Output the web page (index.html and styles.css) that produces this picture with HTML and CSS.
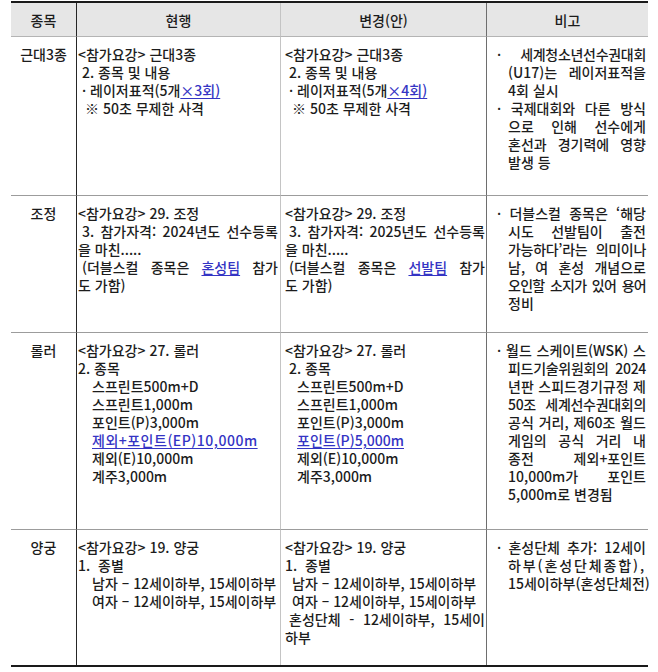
FILE: index.html
```html
<!DOCTYPE html>
<html lang="ko">
<head>
<meta charset="utf-8">
<title>종목 변경 비교표</title>
<link rel="stylesheet" href="styles.css">
</head>
<body>
<table class="cmp">
  <colgroup>
    <col class="w1"><col class="w2"><col class="w3"><col class="w4">
  </colgroup>
  <thead>
    <tr>
      <th class="c1">종목</th>
      <th class="c2">현행</th>
      <th class="c3">변경(안)</th>
      <th class="c4">비고</th>
    </tr>
  </thead>
  <tbody>
    <tr class="r1">
      <td class="c1">근대3종</td>
      <td class="c2">
        <div>&lt;참가요강&gt; 근대3종</div>
        <div class="in1">2. 종목 및 내용</div>
        <div class="in1">· 레이저표적(5개<span class="chg">×3회)</span></div>
        <div class="in2">※ 50초 무제한 사격</div>
      </td>
      <td class="c3">
        <div>&lt;참가요강&gt; 근대3종</div>
        <div class="in1">2. 종목 및 내용</div>
        <div class="in1">· 레이저표적(5개<span class="chg">×4회)</span></div>
        <div class="in2">※ 50초 무제한 사격</div>
      </td>
      <td class="c4">
        <div class="bul j t3">· 세계청소년선수권대회</div>
        <div class="j">(U17)는 레이저표적을</div>
        <div>4회 실시</div>
        <div class="bul j">· 국제대회와 다른 방식</div>
        <div class="j">으로 인해 선수에게</div>
        <div class="j">혼선과 경기력에 영향</div>
        <div>발생 등</div>
      </td>
    </tr>
    <tr class="r2">
      <td class="c1">조정</td>
      <td class="c2">
        <div>&lt;참가요강&gt; 29. 조정</div>
        <div class="in1 j">3. 참가자격: 2024년도 선수등록</div>
        <div>을 마친.....</div>
        <div class="in1 j">(더블스컬 종목은 <span class="chg">혼성팀</span> 참가</div>
        <div>도 가함)</div>
      </td>
      <td class="c3">
        <div>&lt;참가요강&gt; 29. 조정</div>
        <div class="in1 j">3. 참가자격: 2025년도 선수등록</div>
        <div>을 마친.....</div>
        <div class="in1 j">(더블스컬 종목은 <span class="chg">선발팀</span> 참가</div>
        <div>도 가함)</div>
      </td>
      <td class="c4">
        <div class="bul j">· 더블스컬 종목은 ‘해당</div>
        <div class="j">시도 선발팀이 출전</div>
        <div class="j t3">가능하다’라는 의미이나</div>
        <div class="j">남, 여 혼성 개념으로</div>
        <div class="j t7">오인할 소지가 있어 용어</div>
        <div>정비</div>
      </td>
    </tr>
    <tr class="r3">
      <td class="c1">롤러</td>
      <td class="c2">
        <div>&lt;참가요강&gt; 27. 롤러</div>
        <div>2. 종목</div>
        <div class="in3">스프린트500m+D</div>
        <div class="in3">스프린트1,000m</div>
        <div class="in3">포인트(P)3,000m</div>
        <div class="in3"><span class="chg wide">제외+포인트(EP)10,000m</span></div>
        <div class="in3">제외(E)10,000m</div>
        <div class="in3">계주3,000m</div>
      </td>
      <td class="c3">
        <div>&lt;참가요강&gt; 27. 롤러</div>
        <div class="in1">2. 종목</div>
        <div class="in4">스프린트500m+D</div>
        <div class="in4">스프린트1,000m</div>
        <div class="in4">포인트(P)3,000m</div>
        <div class="in4"><span class="chg">포인트(P)5,000m</span></div>
        <div class="in4">제외(E)10,000m</div>
        <div class="in4">계주3,000m</div>
      </td>
      <td class="c4">
        <div class="bul j">· 월드 스케이트(WSK) 스</div>
        <div class="j t3">피드기술위원회의 2024</div>
        <div class="j">년판 스피드경기규정 제</div>
        <div class="j t3">50조 세계선수권대회의</div>
        <div class="j">공식 거리, 제60조 월드</div>
        <div class="j">게임의 공식 거리 내</div>
        <div class="j">종전 제외+포인트</div>
        <div class="j">10,000m가 포인트</div>
        <div>5,000m로 변경됨</div>
      </td>
    </tr>
    <tr class="r4">
      <td class="c1">양궁</td>
      <td class="c2">
        <div>&lt;참가요강&gt; 19. 양궁</div>
        <div>1.&nbsp; 종별</div>
        <div class="in3">남자 – 12세이하부, 15세이하부</div>
        <div class="in3">여자 – 12세이하부, 15세이하부</div>
      </td>
      <td class="c3">
        <div>&lt;참가요강&gt; 19. 양궁</div>
        <div>1.&nbsp; 종별</div>
        <div class="in2">남자 – 12세이하부, 15세이하부</div>
        <div class="in2">여자 – 12세이하부, 15세이하부</div>
        <div class="in1 j">혼성단체 - 12세이하부, 15세이</div>
        <div>하부</div>
      </td>
      <td class="c4">
        <div class="bul j">· 혼성단체 추가: 12세이</div>
        <div class="spread">하부(혼성단체종합),</div>
        <div>15세이하부(혼성단체전)</div>
      </td>
    </tr>
  </tbody>
</table>
</body>
</html>
```

FILE: styles.css
```css
html, body {
  margin: 0;
  background: #ffffff;
}

body {
  padding: 1px 0 0 11px;
  font-family: "Noto Sans CJK KR", "Noto Sans", sans-serif;
  font-size: 14px;
  font-weight: 500;
  line-height: 18px;
  color: #1c1c1c;
}

.cmp {
  border-collapse: separate;
  border-spacing: 0;
  table-layout: fixed;
  width: 637px;
  border-top: 2px solid #1a1a1a;
  border-bottom: 2px solid #1a1a1a;
}

.w1 { width: 66px; }
.w2 { width: 204px; }
.w3 { width: 206px; }
.w4 { width: 161px; }

.cmp th,
.cmp td {
  box-sizing: border-box;
  padding: 0;
}

.cmp th {
  height: 34px;
  padding-top: 1px;
  background: #e6e6e6;
  font-weight: 500;
  text-align: center;
  vertical-align: middle;
  border-bottom: 1px solid #b4b4b4;
}

.cmp td {
  vertical-align: top;
  padding-top: 8px;
  border-bottom: 1px solid #9c9c9c;
}

.cmp tbody tr:last-child td {
  border-bottom: none;
}

.c1 { border-right: 1px solid #262626; }
.c2 { border-right: 1px solid #c4c4c4; }
.c3 { border-right: 1px solid #6e6e6e; }

td.c1 { text-align: center; }
td.c2 { padding-left: 1px; padding-right: 2px; }
td.c3 { padding-left: 4px; padding-right: 1px; }
td.c4 { padding-left: 21px; padding-right: 2px; }

td.c4 div {
  white-space: nowrap;
}

.t3 { letter-spacing: -0.3px; }
.t7 { letter-spacing: -0.7px; }
.spread { letter-spacing: 1.9px; }

.r1 td { height: 159px; }
.r2 td { height: 137px; }
.r3 td { height: 197px; }
.r4 td { height: 135px; }

.in1 { padding-left: 4px; }
.in2 { padding-left: 7px; }
.in3 { padding-left: 14px; }
.in4 { padding-left: 12px; }

.j {
  text-align: justify;
  text-align-last: justify;
}

.bul { margin-left: -11px; }

.chg {
  color: #3434c4;
  text-decoration: underline;
  text-underline-offset: 2px;
}

.wide { letter-spacing: 0.5px; }
```
